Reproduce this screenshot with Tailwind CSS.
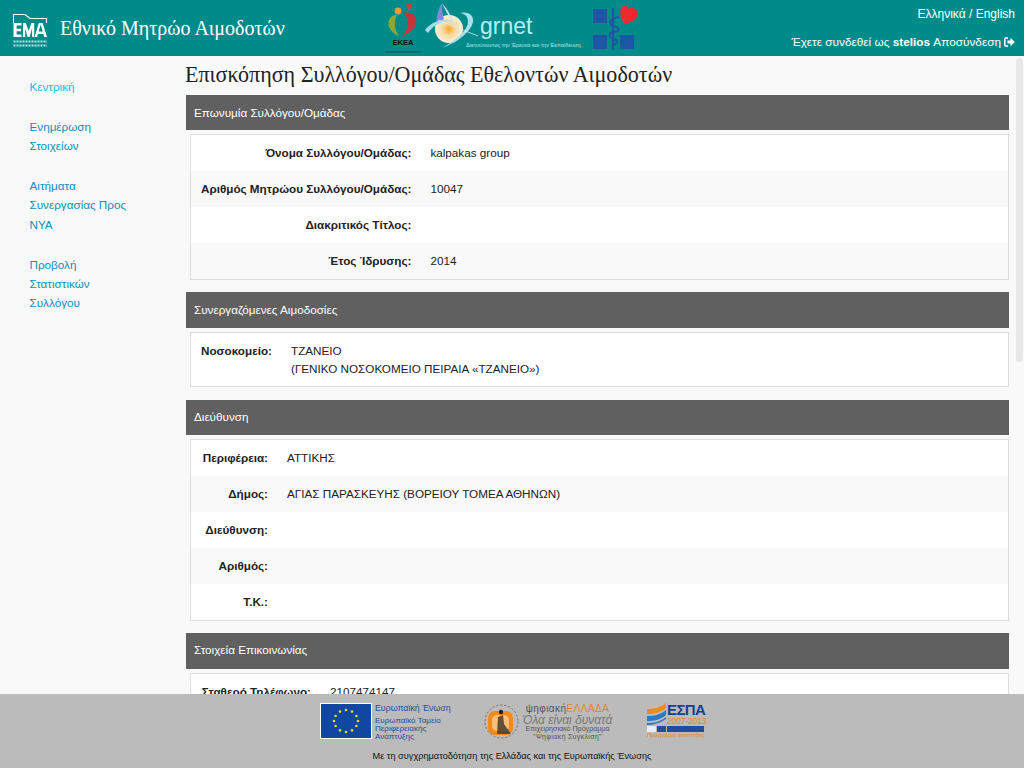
<!doctype html>
<html>

<head>
    <meta charset="UTF-8">
    <meta name="viewport" content="width=device-width, initial-scale=1.0">
    <script src="https://cdn.jsdelivr.net/npm/@tailwindcss/browser@4"></script>
</head>

<body class="font-['Liberation_Sans',Arial,sans-serif] text-[11.7px] text-[#222]">
    <div class="relative h-[768px] w-[1024px] overflow-hidden flex flex-col bg-[#f9f9f9]">

        <!-- header -->
        <header class="h-[56px] shrink-0 bg-[#008b8b] flex text-white">
            <div class="w-[374px] flex items-start pl-[13px]">
                <svg width="35" height="33" viewBox="0 0 35 33" class="shrink-0 mt-[14px]">
                    <path d="M.5 9V.5H12L17 4.5H33.5V9" fill="none" stroke="#fff" stroke-width="1.1" />
                    <path d="M.5 9H8.5V11.4H3.6V14.8H8V17.2H3.6V20.6H8.5V23H.5Z" fill="#fff" />
                    <path d="M10 23V9H12.8L15.6 17L18.4 9H21.2V23H19V14.5L16.6 23H14.6L12.2 14.5V23Z" fill="#fff" />
                    <path d="M21.6 23L25.8 9H29.6L34 23H31.2L30.4 20H25L24.2 23ZM25.6 17.6H29.8L27.7 10.8Z" fill="#fff" />
                    <path d="M.5 27.5H34M.5 31.5H34" stroke="#fff" stroke-width="1.8" stroke-dasharray="2 1" opacity=".75" />
                </svg>
                <span class="ml-[12px] mt-[17px] leading-[23px] font-['Liberation_Serif',serif] text-[20.05px]">Εθνικό Μητρώο Αιμοδοτών</span>
            </div>

            <!-- partner logos -->
            <div class="w-[270px] flex items-start">
                <svg width="36" height="54" viewBox="0 0 36 54" class="mt-[2px] ml-[11px] shrink-0">
                    <circle cx="13" cy="9" r="3.4" fill="#e2a13a" />
                    <circle cx="24" cy="4" r="2.8" fill="#d23a3a" />
                    <path d="M12 13C6 12 2 19 4 25C6 29 10 33 14 34C10 28 8 20 12 13Z" fill="#8fa630" />
                    <path d="M18 11C26 8 33 14 31 22C29 28 22 32 17 35C23 28 26 17 18 11Z" fill="#c4343c" />
                    <text x="18" y="43" text-anchor="middle" font-size="7.5" font-weight="700" fill="#111" font-family="Liberation Sans">ΕΚΕΑ</text>
                    <rect x="0" y="49" width="36" height="1.6" fill="#10393a" opacity=".45" />
                </svg>
                <div class="relative w-[158px] h-[52px] ml-[3px] mt-[1px] shrink-0">
                    <svg width="78" height="50" viewBox="0 0 78 50" class="absolute left-0 top-0">
                        <defs>
                            <radialGradient id="sun">
                                <stop offset="0" stop-color="#f6a81c" />
                                <stop offset=".45" stop-color="#f8d8a0" />
                                <stop offset="1" stop-color="#fdf0dc" />
                            </radialGradient>
                        </defs>
                        <circle cx="25" cy="28" r="14" fill="url(#sun)" />
                        <path d="M12 24C13 14 14 8 18 2C18 10 19 14 20 18Z" fill="#7e88d8" />
                        <path d="M18 2C24 9 28 16 31 26C27 19 22 11 18 2Z" fill="#cfe5f5" />
                        <path d="M1 29C8 20 18 17 29 20C19 20 10 23 4 32Z" fill="#a8d8ec" />
                        <path d="M36 12C44 10 50 14 49 21C47 30 36 40 18 47C32 39 44 29 44 21C44 16 42 13 36 12Z" fill="#a8e0ec" />
                        <path d="M14 19L54 35" stroke="#d8eef4" stroke-width=".8" />
                    </svg>
                    <span class="absolute left-[56px] top-[10px] text-[23px] leading-[30px] text-[#b5f0f0]">grnet</span>
                    <span class="absolute left-[42px] top-[40px] text-[5.6px] leading-[8px] whitespace-nowrap text-[#b5e8e8]">Δικτυώνοντας την Έρευνα και την Εκπαίδευση</span>
                </div>
            </div>
            <svg width="48" height="48" viewBox="0 0 48 48" class="mt-[4px] ml-[-52px] shrink-0">
                <rect x="1" y="5" width="14" height="14" fill="#1f55a5" />
                <rect x="1" y="31" width="14" height="14" fill="#1f55a5" />
                <rect x="28" y="31" width="14" height="14" fill="#1f55a5" />
                <path d="M29 4C33 -1 36 2 36 5C40 2 46 5 46 10C46 15 39 18 34 20C29 18 27 9 29 4Z" fill="#ed2a32" />
                <path d="M21 4V46" stroke="#1f55a5" stroke-width="2.4" />
                <path d="M27 13C16 15 16 20 22 22C28 24 28 27 22 28C16 29 16 33 22 35C26 36 26 39 22 41" fill="none" stroke="#1f55a5" stroke-width="2" />
            </svg>

            <div class="flex-1 flex flex-col items-end pr-[9px] pt-[6px] text-[11.8px]">
                <div class="leading-[16px] text-[12px]">Ελληνικά / English</div>
                <div class="mt-[12px] leading-[16px] flex items-center">
                    <span>Έχετε συνδεθεί ως <b>stelios</b> Αποσύνδεση</span>
                    <svg width="11" height="10" viewBox="0 0 11 10" class="ml-[3px]">
                        <path d="M4 1H2C1.2 1 .8 1.5 .8 2.2V7.8C.8 8.5 1.2 9 2 9H4" fill="none" stroke="#fff" stroke-width="1.5" />
                        <path d="M3.5 3.5H6.5V.8L10.8 5L6.5 9.2V6.5H3.5Z" fill="#fff" />
                    </svg>
                </div>
            </div>
        </header>

        <!-- body -->
        <div class="flex-1 min-h-0 flex overflow-hidden">
            <nav class="w-[186px] shrink-0 pl-[29.5px] pt-[20.9px] leading-[19.2px] text-[#0e8fc0]">
                <a class="block text-[#1ab8ea]">Κεντρική</a>
                <a class="block w-[105px] mt-[20.8px]">Ενημέρωση Στοιχείων</a>
                <a class="block w-[105px] mt-[20.8px]">Αιτήματα Συνεργασίας Προς ΝΥΑ</a>
                <a class="block w-[105px] mt-[20.8px]">Προβολή Στατιστικών Συλλόγου</a>
            </nav>

            <main class="w-[823px] shrink-0">
                <h1 class="font-['Liberation_Serif',serif] text-[22.05px] leading-[26px] ml-[-1px] mt-[6px] mb-[7px] text-[#222]">Επισκόπηση Συλλόγου/Ομάδας Εθελοντών Αιμοδοτών</h1>

                <h2 class="h-[35px] bg-[#606060] text-white pl-[8px] leading-[36px]">Επωνυμία Συλλόγου/Ομάδας</h2>
                <div class="ml-[4px] mt-[4px] mb-[12px] border border-[#ddd] bg-white">
                    <table class="w-full">
                        <tbody>
                            <tr class="h-[36px]">
                                <th class="px-[10px] text-right whitespace-nowrap w-[1%]">Όνομα Συλλόγου/Ομάδας:</th>
                                <td class="px-[10px] pl-[9px]">kalpakas group</td>
                            </tr>
                            <tr class="h-[36px] bg-[#f9f9f9]">
                                <th class="px-[10px] text-right whitespace-nowrap">Αριθμός Μητρώου Συλλόγου/Ομάδας:</th>
                                <td class="px-[10px] pl-[9px]">10047</td>
                            </tr>
                            <tr class="h-[36px]">
                                <th class="px-[10px] text-right whitespace-nowrap">Διακριτικός Τίτλος:</th>
                                <td class="px-[10px]"></td>
                            </tr>
                            <tr class="h-[36px] bg-[#f9f9f9]">
                                <th class="px-[10px] text-right whitespace-nowrap">Έτος Ίδρυσης:</th>
                                <td class="px-[10px] pl-[9px]">2014</td>
                            </tr>
                        </tbody>
                    </table>
                </div>

                <h2 class="h-[36px] bg-[#606060] text-white pl-[8px] leading-[36px]">Συνεργαζόμενες Αιμοδοσίες</h2>
                <div class="ml-[4px] mt-[4px] mb-[13px] border border-[#ddd] bg-white h-[55px] flex pl-[10px] pt-[9px] leading-[18px]">
                    <b class="w-[90px] shrink-0">Νοσοκομείο:</b>
                    <div>ΤΖΑΝΕΙΟ<br>(ΓΕΝΙΚΟ ΝΟΣΟΚΟΜΕΙΟ ΠΕΙΡΑΙΑ «ΤΖΑΝΕΙΟ»)</div>
                </div>

                <h2 class="h-[35px] bg-[#606060] text-white pl-[8px] leading-[34px]">Διεύθυνση</h2>
                <div class="ml-[4px] mt-[4px] mb-[12px] border border-[#ddd] bg-white">
                    <table class="w-full">
                        <tbody>
                            <tr class="h-[36px]">
                                <th class="w-[87px] px-[10px] text-right whitespace-nowrap">Περιφέρεια:</th>
                                <td class="px-[9px]">ΑΤΤΙΚΗΣ</td>
                            </tr>
                            <tr class="h-[36px] bg-[#f9f9f9]">
                                <th class="px-[10px] text-right whitespace-nowrap">Δήμος:</th>
                                <td class="px-[9px]">ΑΓΙΑΣ ΠΑΡΑΣΚΕΥΗΣ (ΒΟΡΕΙΟΥ ΤΟΜΕΑ ΑΘΗΝΩΝ)</td>
                            </tr>
                            <tr class="h-[36px]">
                                <th class="px-[10px] text-right whitespace-nowrap">Διεύθυνση:</th>
                                <td></td>
                            </tr>
                            <tr class="h-[36px] bg-[#f9f9f9]">
                                <th class="px-[10px] text-right whitespace-nowrap">Αριθμός:</th>
                                <td></td>
                            </tr>
                            <tr class="h-[36px]">
                                <th class="px-[10px] text-right whitespace-nowrap">Τ.Κ.:</th>
                                <td></td>
                            </tr>
                        </tbody>
                    </table>
                </div>

                <h2 class="h-[36px] bg-[#606060] text-white pl-[8px] leading-[34px]">Στοιχεία Επικοινωνίας</h2>
                <div class="ml-[4px] mt-[4px] border border-[#ddd] bg-white">
                    <table class="w-full">
                        <tbody>
                            <tr class="h-[36px]">
                                <th class="w-[130px] px-[10px] text-right whitespace-nowrap">Σταθερό Τηλέφωνο:</th>
                                <td class="px-[9px]">2107474147</td>
                            </tr>
                        </tbody>
                    </table>
                </div>
            </main>
        </div>

        <!-- footer -->
        <footer class="h-[74px] shrink-0 bg-[#bbbbbb] relative z-10 flex flex-col items-center">
            <div class="h-[56px] w-full flex items-start pl-[320px]">
                <svg width="52" height="36" viewBox="0 0 52 36" class="mt-[9px] shrink-0">
                    <rect x=".5" y=".5" width="51" height="35" fill="#0f47a1" stroke="#fff" />
                    <g fill="#f5d90a">
                        <circle cx="26" cy="7" r="1.3" /><circle cx="32" cy="8.6" r="1.3" /><circle cx="36.4" cy="13" r="1.3" />
                        <circle cx="38" cy="18" r="1.3" /><circle cx="36.4" cy="23" r="1.3" /><circle cx="32" cy="27.4" r="1.3" />
                        <circle cx="26" cy="29" r="1.3" /><circle cx="20" cy="27.4" r="1.3" /><circle cx="15.6" cy="23" r="1.3" />
                        <circle cx="14" cy="18" r="1.3" /><circle cx="15.6" cy="13" r="1.3" /><circle cx="20" cy="8.6" r="1.3" />
                    </g>
                </svg>
                <div class="ml-[3px] mt-[9px] w-[79px] shrink-0 text-[#1a4fa0] text-[8px] leading-[8.2px]">
                    <div class="text-[8.8px] leading-[10px] mb-[4px] whitespace-nowrap">Ευρωπαϊκή Ένωση</div>
                    <div>Ευρωπαϊκό Ταμείο</div>
                    <div>Περιφερειακής</div>
                    <div>Ανάπτυξης</div>
                </div>
                <svg width="36" height="36" viewBox="0 0 36 36" class="ml-[30px] mt-[10px] shrink-0">
                    <circle cx="17.5" cy="17.5" r="16.5" fill="none" stroke="#7a6a58" stroke-dasharray="2 2" />
                    <rect x="4" y="7" width="25" height="24" rx="7" fill="#f08a1d" />
                    <rect x="8" y="11" width="17" height="16" rx="5" fill="#f8c077" />
                    <circle cx="17" cy="8" r="2.2" fill="#222" />
                    <path d="M14 13L19 11L20 20L27 30H13Z" fill="#4a3b2c" opacity=".85" />
                </svg>
                <div class="ml-[2px] mt-[9px] w-[91px] shrink-0 text-center text-[#555]">
                    <div class="text-[10px] leading-[11px] tracking-[0.45px] whitespace-nowrap">ψηφιακή<span class="text-[#e8841a]">ΕΛΛΑΔΑ</span></div>
                    <div class="text-[12px] leading-[11px] mt-[1px] italic whitespace-nowrap text-[#777]">Όλα είναι δυνατά</div>
                    <div class="text-[7.1px] leading-[7.5px] whitespace-nowrap">Επιχειρησιακό Πρόγραμμα</div>
                    <div class="text-[7.1px] leading-[7.5px] tracking-[0.3px] whitespace-nowrap">"Ψηφιακή Σύγκλιση"</div>
                </div>
                <div class="ml-[34px] mt-[9px] w-[57px] shrink-0">
                    <div class="flex items-start">
                        <svg width="19" height="23" viewBox="0 0 19 23" class="shrink-0">
                            <path d="M0 6C7 6 13 5 19 0V5C13 10 7 11 0 11Z" fill="#f08a1d" />
                            <path d="M0 13C7 13 13 12 19 7V12C13 17 7 18 0 18Z" fill="#2f79c4" />
                            <path d="M0 20C7 20 13 19 19 14V16C13 20 7 22 0 22Z" fill="#2f79c4" />
                        </svg>
                        <div class="ml-[1px]">
                            <div class="text-[15px] leading-[13px] font-bold tracking-[-0.6px] text-[#173f8a] whitespace-nowrap">ΕΣΠΑ</div>
                            <div class="text-[8.6px] leading-[10px] tracking-[-0.2px] text-[#e8841a] whitespace-nowrap">2007-2013</div>
                        </div>
                    </div>
                    <div class="flex h-[6px]">
                        <div class="w-[9px] bg-[#e8eef5]"></div>
                        <div class="w-[9px] ml-[1px] bg-[#1f4f9c]"></div>
                        <div class="flex-1 ml-[1px] bg-[#1f4f9c]"></div>
                    </div>
                    <div class="text-[5.6px] leading-[7px] text-[#e8841a] whitespace-nowrap">Πρόγραμμα ανάπτυξης</div>
                </div>
            </div>
            <div class="text-[9.2px] leading-[12px] text-[#111]">Με τη συγχρηματοδότηση της Ελλάδας και της Ευρωπαϊκής Ένωσης</div>
        </footer>

        <!-- scrollbar thumb -->
        <div class="absolute right-[1px] top-[58px] w-[7px] h-[304px] rounded-[4px] bg-[#e8e8e8]"></div>
    </div>
</body>

</html>
